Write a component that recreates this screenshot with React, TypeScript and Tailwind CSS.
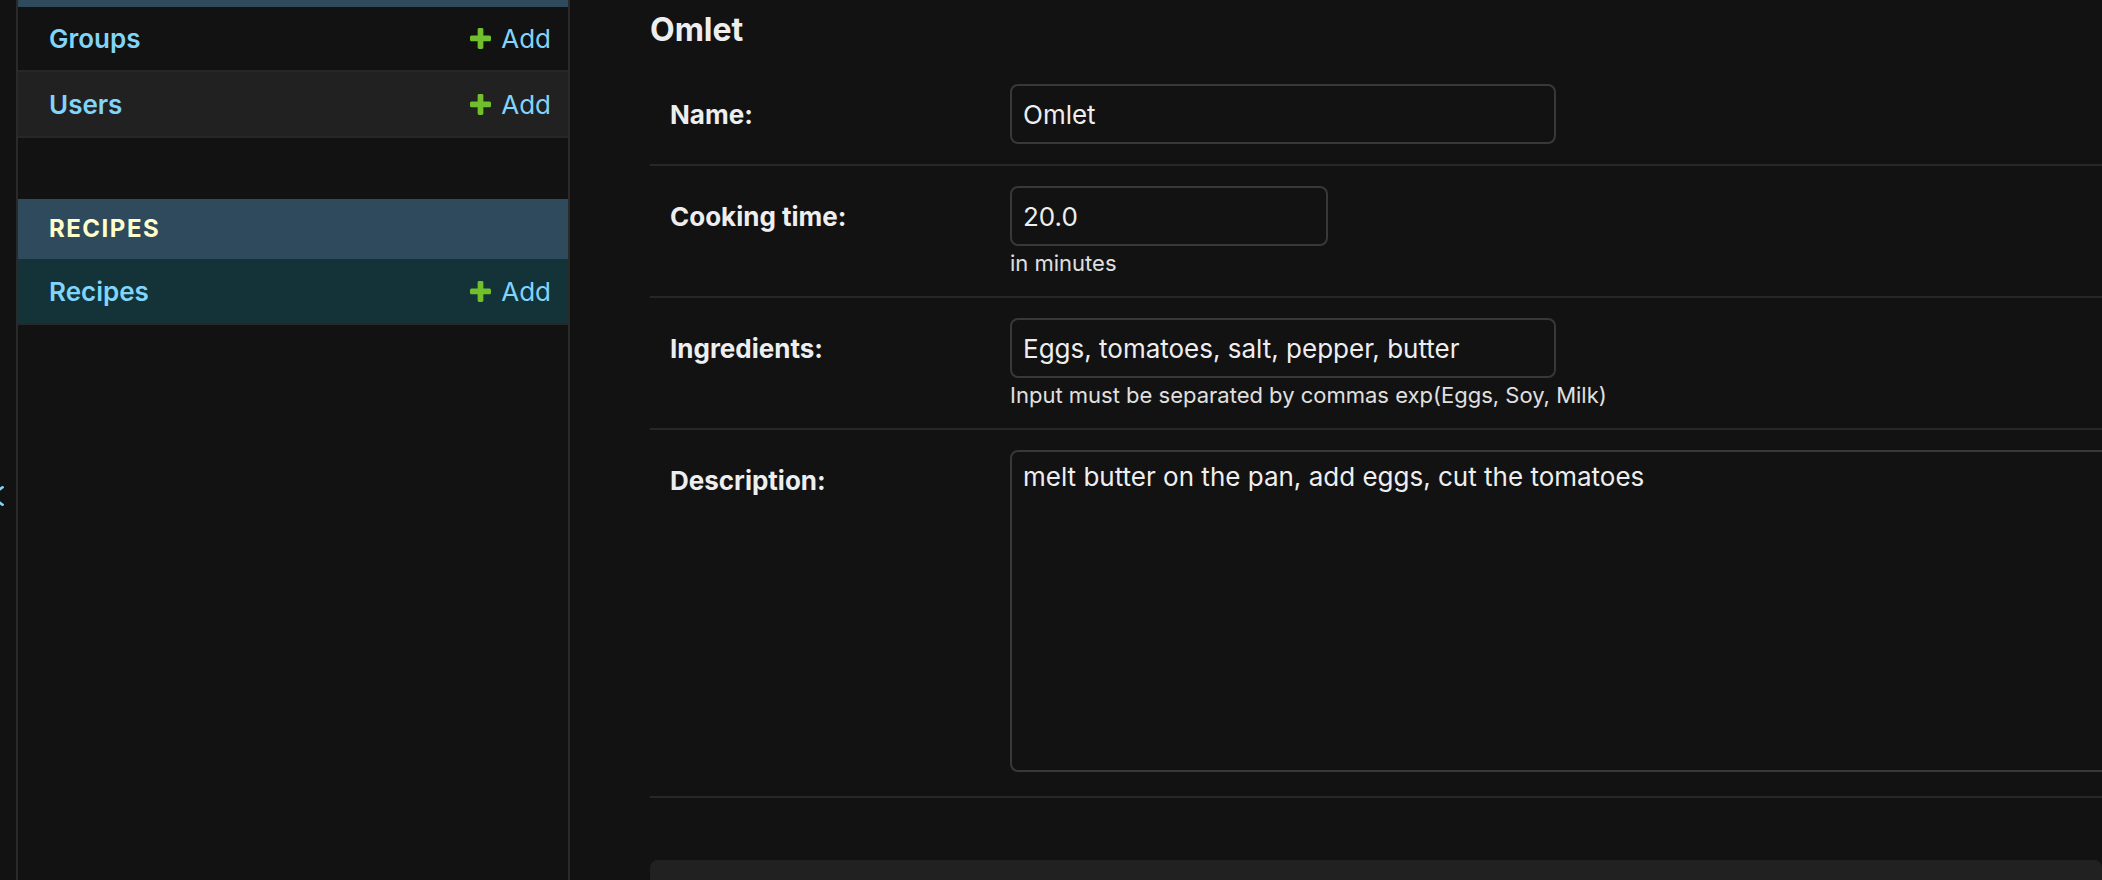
import React from "react";

const PlusIcon = () => (
   <svg viewBox="192 192 1408 1408" className="w-[21px] h-[21px] shrink-0">
      <path
         fill="#70bf2b"
         d="M1600 796v192q0 40-28 68t-68 28h-416v416q0 40-28 68t-68 28h-192q-40 0-68-28t-28-68v-416h-416q-40 0-68-28t-28-68v-192q0-40 28-68t68-28h416v-416q0-40 28-68t68-28h192q40 0 68 28t28 68v416h416q40 0 68 28t28 68z"
      />
   </svg>
);

function ModelRow({ name, bg, h }: { name: string; bg: string; h: string }) {
   return (
      <div className={`flex items-center justify-between border-b-2 border-[#272727] pl-[31px] pr-[17px] ${h} ${bg}`}>
         <span className="text-[26px] font-semibold text-[#81d4fa]">{name}</span>
         <span className="flex items-center gap-[10px] text-[26px] text-[#81d4fa]">
            <PlusIcon />
            Add
         </span>
      </div>
   );
}

function Label({ text }: { text: string }) {
   return (
      <div className="w-[360px] shrink-0 pl-[20px] h-[60px] flex items-center">
         <label className="text-[26px] font-bold text-[#eeeeee]">{text}</label>
      </div>
   );
}

const inputCls =
   "h-[60px] border-2 border-[#383838] rounded-[8px] bg-[#121212] px-[11px] text-[26px] text-[#eeeeee] outline-none";

export default function App() {
   return (
      <div className="flex h-screen w-screen overflow-hidden bg-[#121212] font-[family-name:Inter,sans-serif]">
         {/* sidebar toggle strip */}
         <div className="w-[18px] shrink-0 border-r-2 border-[#2a2a2a] overflow-hidden pt-[486px]">
            <svg viewBox="0 0 4 20" className="w-[4px] h-[20px]">
               <polyline points="3.5,0.5 -9,10 3.5,19.5" fill="none" stroke="#81d4fa" strokeWidth="2.6" />
            </svg>
         </div>

         {/* nav sidebar */}
         <div className="w-[552px] shrink-0 border-r-2 border-[#2a2a2a]">
            <div className="h-[7px] bg-[#2e4a5c]" />
            <ModelRow name="Groups" bg="bg-[#121212]" h="h-[65px]" />
            <ModelRow name="Users" bg="bg-[#212121]" h="h-[66px]" />
            <div className="h-[61px]" />
            <div className="h-[60px] bg-[#2e4a5c] flex items-center pl-[31px]">
               <span className="text-[24px] font-bold tracking-[1.5px] text-[#ffffcc]">RECIPES</span>
            </div>
            <ModelRow name="Recipes" bg="bg-[#143339]" h="h-[66px]" />
         </div>

         {/* main content */}
         <div className="flex-1 min-w-0 pl-[80px] overflow-hidden">
            <h2 className="h-[60px] mb-[4px] flex items-center text-[32px] font-bold text-[#eeeeee]">Omlet</h2>

            <div className="flex border-b-2 border-[#272727] py-[20px]">
               <Label text="Name:" />
               <input className={`${inputCls} w-[546px] shrink-0`} defaultValue="Omlet" />
            </div>

            <div className="flex border-b-2 border-[#272727] pt-[20px] pb-[18px]">
               <Label text="Cooking time:" />
               <div className="flex flex-col">
                  <input className={`${inputCls} w-[318px]`} defaultValue="20.0" />
                  <div className="mt-[3px] mb-[1px] text-[22px] leading-[28px] text-[#e0e0e0]">in minutes</div>
               </div>
            </div>

            <div className="flex border-b-2 border-[#272727] pt-[20px] pb-[18px]">
               <Label text="Ingredients:" />
               <div className="flex flex-col">
                  <input className={`${inputCls} w-[546px]`} defaultValue="Eggs, tomatoes, salt, pepper, butter" />
                  <div className="mt-[3px] mb-[1px] text-[22px] leading-[28px] text-[#e0e0e0]">
                     Input must be separated by commas exp(Eggs, Soy, Milk)
                  </div>
               </div>
            </div>

            <div className="flex items-start border-b-2 border-[#272727] pt-[20px] pb-[24px]">
               <Label text="Description:" />
               <textarea
                  className="block w-[1400px] h-[322px] shrink-0 resize-none border-2 border-[#383838] rounded-[8px] bg-[#121212] px-[11px] pt-[8px] text-[26px] leading-[1.3] text-[#eeeeee] outline-none"
                  defaultValue="melt butter on the pan, add eggs, cut the tomatoes"
               />
            </div>

            <div className="mt-[62px] h-[140px] rounded-[8px] bg-[#212121]" />
         </div>
      </div>
   );
}
